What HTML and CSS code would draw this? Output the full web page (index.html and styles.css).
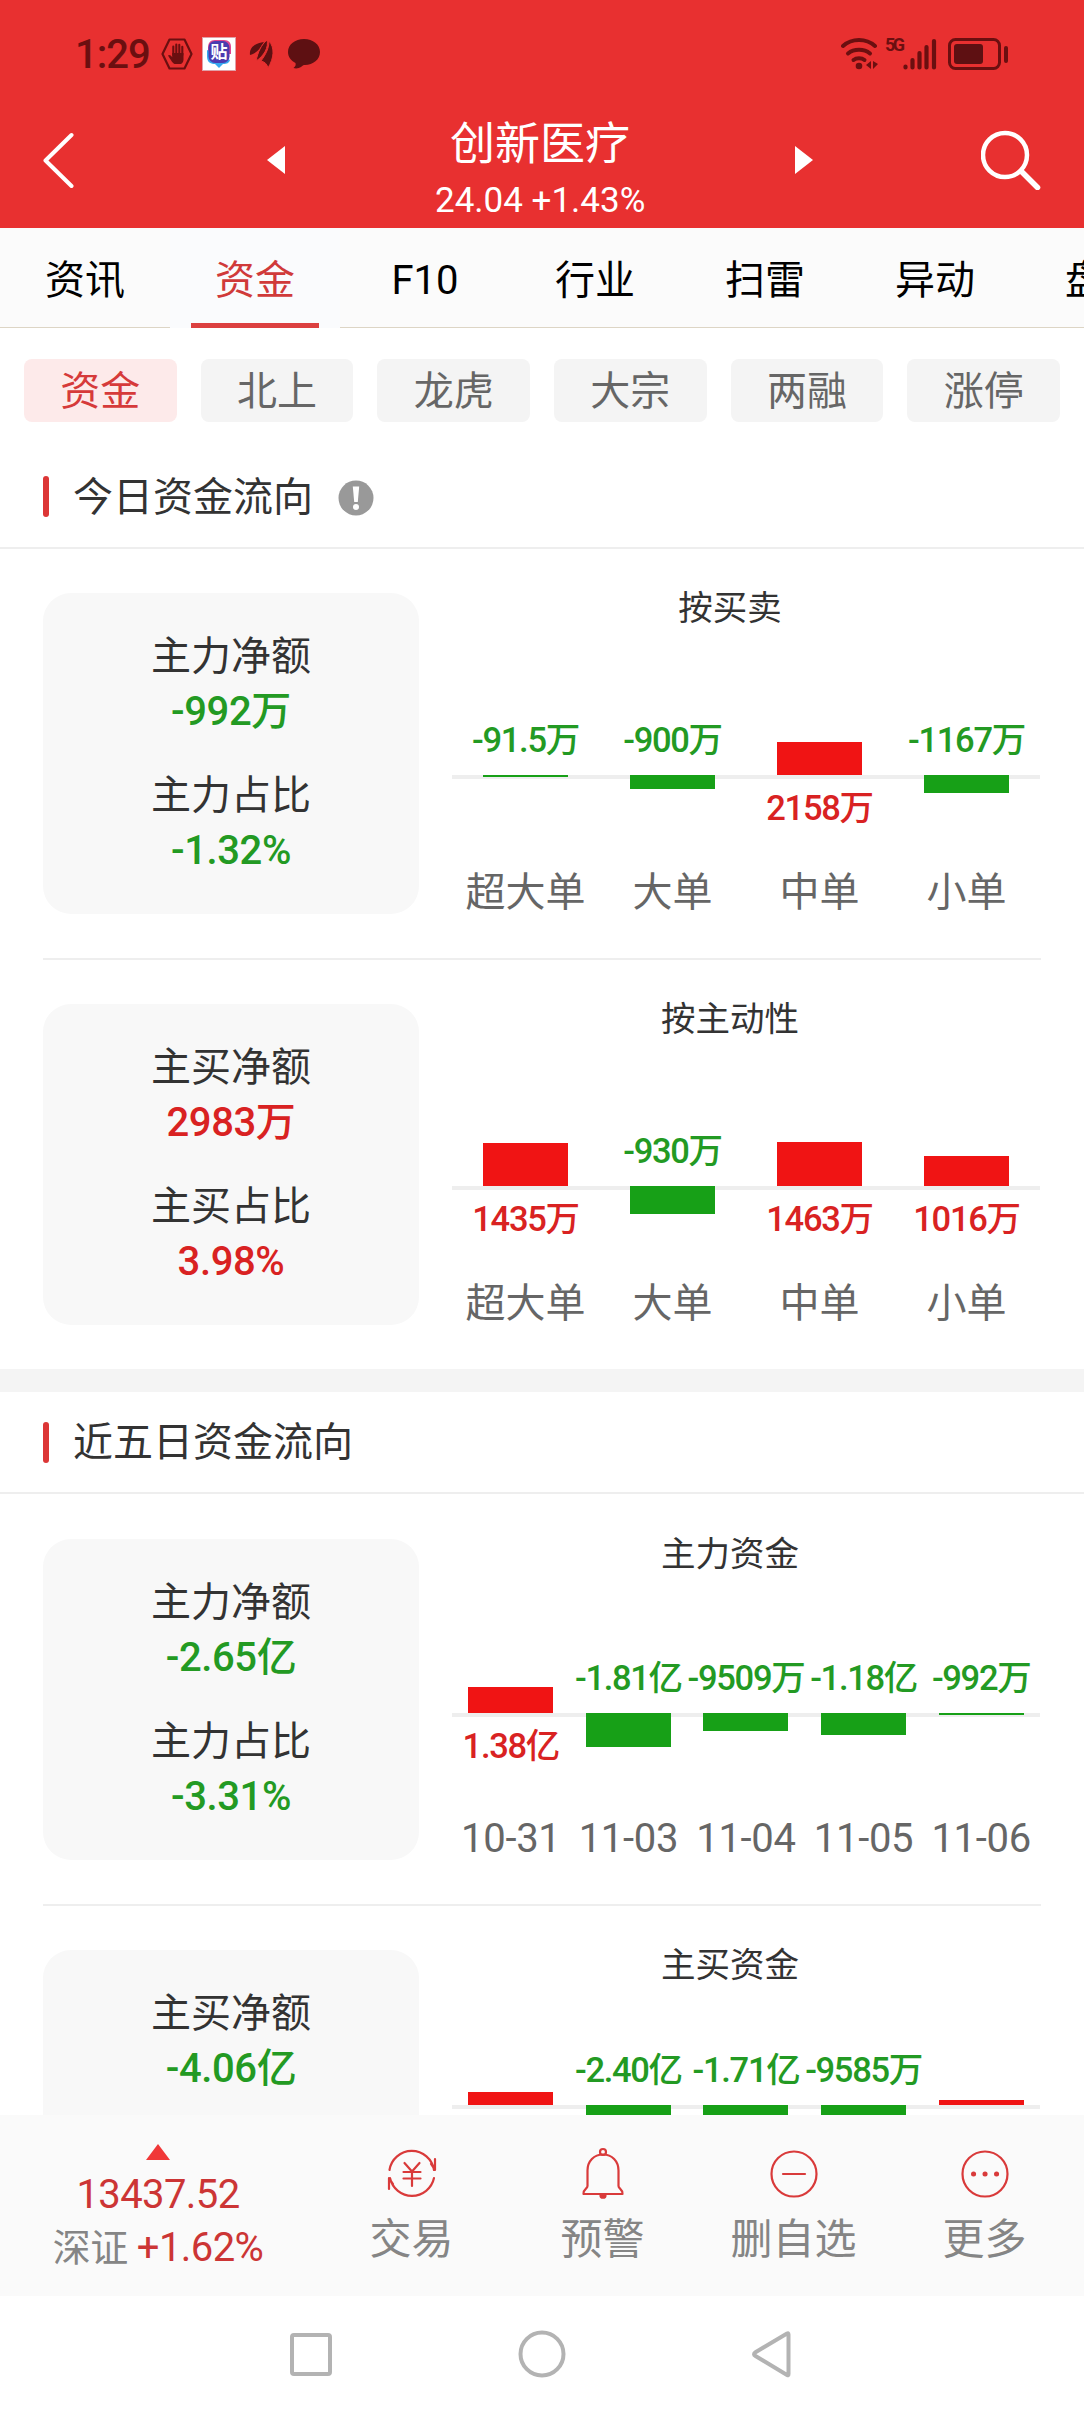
FILE: index.html
```html
<!DOCTYPE html>
<html lang="zh-CN">
<head>
    <meta charset="UTF-8">
    <meta name="viewport" content="width=device-width, initial-scale=1.0">
    <title>创新医疗 - 资金</title>
    <link rel="stylesheet" href="styles.css">
</head>
<body>
    <header class="header">
        <div class="status-bar">
            <div class="status-left">
                <span class="clock">1:29</span>
                <svg class="icon-hand" width="32" height="32" viewBox="0 0 32 32">
                    <path d="M8.500 1.500h15L30.500 16l-7 14.500h-15L1.500 16z" fill="none" stroke="#6b0f10" stroke-width="2.200" stroke-linejoin="round"/>
                    <path d="M12.300 17V8.500M15.300 16V6.500M18.300 16V6.800M21.300 17V8.800" stroke="#6b0f10" stroke-width="2.100" stroke-linecap="round"/>
                    <path d="M11.200 15h11.300v6.500c0 2-1 3.500-2.500 4.500h-6.500c-2-1-3-3-6.500-8.500 1-1.200 2.800-.5 4.200 1.700z" fill="#6b0f10"/>
                </svg>
                <svg class="icon-tie" width="34" height="34" viewBox="0 0 34 34">
                    <rect x=".5" y=".5" width="33" height="33" fill="#fff" stroke="#e0a0a8"/>
                    <path d="M13 3h9c5 0 7 3 7 7v7H6v-6c0-5 2-8 7-8z" fill="#e0458f"/>
                    <path d="M5 13v6c0 6 3 8 8 8l4 4 4-4c4 0 6-1 7-4z" fill="#35a8f0"/>
                    <rect x="6.500" y="4" width="21" height="22" rx="6.500" fill="#4a3bb0"/>
                    <text x="17" y="21" text-anchor="middle" class="tie-text">贴</text>
                </svg>
                <svg class="icon-wing" width="25" height="30" viewBox="0 0 25 30">
                    <path d="M1 16C0 8 7 4 15 3 11 9 10 13 1 16z" fill="#5e1012"/>
                    <path d="M7 22C9 13 12 6 18 1c2 7-3 16-11 21z" fill="#5e1012" stroke="#e83030"/>
                    <path d="M12 22C17 15 20 9 20 2c6 7 5 17-1 27-1-4-3-6-7-7z" fill="#5e1012" stroke="#e83030"/>
                </svg>
                <svg class="icon-bubble" width="32" height="30" viewBox="0 0 32 30">
                    <path d="M16 0c9 0 16 5.500 16 13s-7 13-15 13c-2 0-2 .5-4 2-2 1.300-5 2-7.500 1 2-1.500 2.500-3 2-5C3 21.500 0 18 0 13 0 5.500 7 0 16 0z" fill="#5e1012"/>
                </svg>
            </div>
            <div class="status-right">
                <svg width="38" height="32" viewBox="0 0 38 32">
                    <g fill="none" stroke="#6b0f10" stroke-width="4" stroke-linecap="round">
                        <path d="M2 8C11 0 25 0 34 8"/>
                        <path d="M7 15.500c6-5 16-5 22 0"/>
                        <path d="M12.500 22c3-2.500 8-2.500 11 0"/>
                    </g>
                    <circle cx="18" cy="28" r="3.300" fill="#6b0f10"/>
                    <path d="M30 23v8l-5-4zM32 23v8l5-5z" fill="#6b0f10"/>
                </svg>
                <span class="net-text">5G</span>
                <svg class="icon-signal" width="34" height="32" viewBox="0 0 34 32">
                    <path d="M2.500 28.500v1M9.500 22v7.500M16.500 15v14.500M23.500 9v20.500M31 3v26.500" stroke="#6b0f10" stroke-width="4.200" stroke-linecap="round"/>
                </svg>
                <svg class="icon-battery" width="61" height="32" viewBox="0 0 61 32">
                    <rect x="1.500" y="1.500" width="50" height="29" rx="6" fill="none" stroke="#6b0f10" stroke-width="3"/>
                    <rect x="6" y="6" width="29" height="20" rx="3" fill="#5e1012"/>
                    <rect x="56" y="8" width="4" height="17" rx="2" fill="#6b0f10"/>
                </svg>
            </div>
        </div>
        <div class="title-bar">
            <svg width="32" height="58" viewBox="0 0 32 58">
                <path d="M28.500 4 2.500 29.500l26 25.500" fill="none" stroke="#fff" stroke-width="4" stroke-linecap="round" stroke-linejoin="round"/>
            </svg>
            <svg width="18" height="28" viewBox="0 0 18 28"><path d="M18 0v28L0 14z" fill="#fff"/></svg>
            <div class="stock">
                <h1>创新医疗</h1>
                <p>24.04 +1.43%</p>
            </div>
            <svg class="next" width="18" height="28" viewBox="0 0 18 28"><path d="M0 0v28l18-14z" fill="#fff"/></svg>
            <svg class="search" width="60" height="60" viewBox="0 0 60 60">
                <circle cx="24" cy="25" r="22" fill="none" stroke="#fff" stroke-width="4.500"/>
                <path d="m40.500 41.500 16 16" stroke="#fff" stroke-width="5.500" stroke-linecap="round"/>
            </svg>
        </div>
    </header>

    <nav class="tabs">
        <a class="tab">资讯</a>
        <a class="tab active">资金</a>
        <a class="tab">F10</a>
        <a class="tab">行业</a>
        <a class="tab">扫雷</a>
        <a class="tab">异动</a>
        <a class="tab">盘口</a>
    </nav>

    <main class="content">
        <div class="pills">
            <span class="pill active">资金</span>
            <span class="pill">北上</span>
            <span class="pill">龙虎</span>
            <span class="pill">大宗</span>
            <span class="pill">两融</span>
            <span class="pill">涨停</span>
        </div>

        <section>
            <h2 class="section-title"><span>今日资金流向</span>
                <svg class="info" width="36" height="36" viewBox="0 0 36 36">
                    <circle cx="18" cy="18" r="17.500" fill="#999"/>
                    <path d="M14.800 6.500h6.400L19.800 22h-3.600z" fill="#fff"/>
                    <circle cx="18" cy="27" r="3" fill="#fff"/>
                </svg>
            </h2>
            <div class="row">
                <div class="card">
                    <h3>主力净额</h3>
                    <p class="down">-992万</p>
                    <h3>主力占比</h3>
                    <p class="down">-1.32%</p>
                </div>
                <div class="chart">
                    <h4>按买卖</h4>
                    <div class="plot">
                        <div class="col">
                            <div class="above"><span class="value down">-91.5万</span></div>
                            <div class="below"><i class="bar bar-down" style="height: 2px"></i></div>
                            <span class="label">超大单</span>
                        </div>
                        <div class="col">
                            <div class="above"><span class="value down">-900万</span></div>
                            <div class="below"><i class="bar bar-down" style="height: 14px"></i></div>
                            <span class="label">大单</span>
                        </div>
                        <div class="col">
                            <div class="above"><i class="bar bar-up" style="height: 33px"></i></div>
                            <div class="below"><span class="value up">2158万</span></div>
                            <span class="label">中单</span>
                        </div>
                        <div class="col">
                            <div class="above"><span class="value down">-1167万</span></div>
                            <div class="below"><i class="bar bar-down" style="height: 18px"></i></div>
                            <span class="label">小单</span>
                        </div>
                    </div>
                </div>
            </div>
            <div class="row">
                <div class="card">
                    <h3>主买净额</h3>
                    <p class="up">2983万</p>
                    <h3>主买占比</h3>
                    <p class="up">3.98%</p>
                </div>
                <div class="chart">
                    <h4>按主动性</h4>
                    <div class="plot">
                        <div class="col">
                            <div class="above"><i class="bar bar-up" style="height: 43px"></i></div>
                            <div class="below"><span class="value up">1435万</span></div>
                            <span class="label">超大单</span>
                        </div>
                        <div class="col">
                            <div class="above"><span class="value down">-930万</span></div>
                            <div class="below"><i class="bar bar-down" style="height: 28px"></i></div>
                            <span class="label">大单</span>
                        </div>
                        <div class="col">
                            <div class="above"><i class="bar bar-up" style="height: 44px"></i></div>
                            <div class="below"><span class="value up">1463万</span></div>
                            <span class="label">中单</span>
                        </div>
                        <div class="col">
                            <div class="above"><i class="bar bar-up" style="height: 30px"></i></div>
                            <div class="below"><span class="value up">1016万</span></div>
                            <span class="label">小单</span>
                        </div>
                    </div>
                </div>
            </div>
        </section>

        <section class="section-five">
            <h2 class="section-title"><span>近五日资金流向</span></h2>
            <div class="row">
                <div class="card">
                    <h3>主力净额</h3>
                    <p class="down">-2.65亿</p>
                    <h3>主力占比</h3>
                    <p class="down">-3.31%</p>
                </div>
                <div class="chart">
                    <h4>主力资金</h4>
                    <div class="plot plot-main">
                        <div class="col">
                            <div class="above"><i class="bar bar-up" style="height: 26px"></i></div>
                            <div class="below"><span class="value up">1.38亿</span></div>
                            <span class="label date">10-31</span>
                        </div>
                        <div class="col">
                            <div class="above"><span class="value down">-1.81亿</span></div>
                            <div class="below"><i class="bar bar-down" style="height: 34px"></i></div>
                            <span class="label date">11-03</span>
                        </div>
                        <div class="col">
                            <div class="above"><span class="value down">-9509万</span></div>
                            <div class="below"><i class="bar bar-down" style="height: 18px"></i></div>
                            <span class="label date">11-04</span>
                        </div>
                        <div class="col">
                            <div class="above"><span class="value down">-1.18亿</span></div>
                            <div class="below"><i class="bar bar-down" style="height: 22px"></i></div>
                            <span class="label date">11-05</span>
                        </div>
                        <div class="col">
                            <div class="above"><span class="value down">-992万</span></div>
                            <div class="below"><i class="bar bar-down" style="height: 2px"></i></div>
                            <span class="label date">11-06</span>
                        </div>
                    </div>
                </div>
            </div>
            <div class="row">
                <div class="card">
                    <h3>主买净额</h3>
                    <p class="down">-4.06亿</p>
                </div>
                <div class="chart">
                    <h4>主买资金</h4>
                    <div class="plot plot-buy">
                        <div class="col">
                            <div class="above"><i class="bar bar-up" style="height: 13px"></i></div>
                            <div class="below"></div>
                        </div>
                        <div class="col">
                            <div class="above"><span class="value down">-2.40亿</span></div>
                            <div class="below"><i class="bar bar-down" style="height: 52px"></i></div>
                        </div>
                        <div class="col">
                            <div class="above"><span class="value down">-1.71亿</span></div>
                            <div class="below"><i class="bar bar-down" style="height: 37px"></i></div>
                        </div>
                        <div class="col">
                            <div class="above"><span class="value down">-9585万</span></div>
                            <div class="below"><i class="bar bar-down" style="height: 21px"></i></div>
                        </div>
                        <div class="col">
                            <div class="above"><i class="bar bar-up" style="height: 5px"></i></div>
                            <div class="below"></div>
                        </div>
                    </div>
                </div>
            </div>
        </section>
    </main>

    <footer class="toolbar">
        <div class="index">
            <svg width="24" height="16" viewBox="0 0 24 16"><path d="M12 0l12 16H0z" fill="#f03838"/></svg>
            <strong>13437.52</strong>
            <p><span>深证</span> +1.62%</p>
        </div>
        <a class="tool">
            <svg width="52" height="52" viewBox="0 0 52 52">
                <path d="M3.500 22a22.500 22.500 0 0 1 44.500 0M49 11v11l-4-6M48 30a22.500 22.500 0 0 1-44 0M3 41V30l4 6"/>
                <path d="m18.500 15 7.500 8.500 7.500-8.500M26 23.500V38M17.500 24h17M17.500 30.500h17"/>
            </svg>
            <span>交易</span>
        </a>
        <a class="tool">
            <svg width="52" height="52" viewBox="0 0 52 52">
                <circle cx="26" cy="4" r="3"/>
                <path d="M26 6.500c-9 0-15.500 6.500-15.500 16V38c0 3-4 2.500-4 8h39c0-5.500-4-5-4-8V22.500c0-9.500-6.500-16-15.500-16z"/>
                <path d="M23.500 47.500h5c0 3-5 3-5 0z" fill="#d93a3a"/>
            </svg>
            <span>预警</span>
        </a>
        <a class="tool">
            <svg width="52" height="52" viewBox="0 0 52 52">
                <circle cx="26" cy="26" r="22.500"/>
                <path d="M15 26h22"/>
            </svg>
            <span>删自选</span>
        </a>
        <a class="tool">
            <svg width="52" height="52" viewBox="0 0 52 52">
                <circle cx="26" cy="26" r="22.500"/>
                <path d="M14.500 26h.1M26 26h.1M37.500 26h.1" stroke-width="5" class="dots"/>
            </svg>
            <span>更多</span>
        </a>
    </footer>

    <div class="nav-bar">
        <svg width="46" height="46" viewBox="0 0 46 46"><rect x="4" y="4" width="38" height="39" rx="2"/></svg>
        <svg width="50" height="50" viewBox="0 0 50 50"><circle cx="25" cy="25" r="21.500"/></svg>
        <svg width="46" height="50" viewBox="0 0 46 50"><path d="M38.500 5.500v39.500c0 1.500-.5 1.500-1.500 1L5.500 27c-2-1.200-2-2.500 0-3.800L37 4.500c1-.5 1.500-.5 1.500 1z"/></svg>
    </div>
</body>
</html>
```
FILE: styles.css
```css
* {
    margin: 0;
    padding: 0;
    box-sizing: border-box;
}

body {
    display: flex;
    flex-direction: column;
    width: 1084px;
    height: 2412px;
    overflow: hidden;
    font-family: Roboto, "Noto Sans CJK SC", sans-serif;
    font-size: 39px;
    color: #333;
    background: #fff;
}

h1, h2, h3, h4 {
    font-weight: 400;
}

svg {
    display: block;
    flex-shrink: 0;
}

.up {
    color: #d92222;
}

.down {
    color: #239a23;
}

/* 顶部 */
.header {
    height: 228px;
    background: #e83030;
}

.status-bar {
    display: flex;
    justify-content: space-between;
    height: 108px;
    padding: 0 75px;
    color: #6b0f10;
}

.status-left,
.status-right {
    display: flex;
    align-items: center;
}

.clock {
    width: 86px;
    font-size: 40px;
    font-weight: 500;
    letter-spacing: -1px;
}

.icon-tie {
    margin-left: 9px;
}

.icon-wing {
    margin-left: 13px;
}

.icon-bubble {
    margin-left: 14px;
}

.tie-text {
    font-size: 17px;
    font-weight: 700;
    fill: #fff;
}

.net-text {
    width: 24px;
    padding: 0 0 18px 6px;
    font-size: 18px;
    font-weight: 700;
    line-height: 18px;
    letter-spacing: -2.5px;
}

.icon-battery {
    margin-left: 11px;
}

.title-bar {
    display: grid;
    grid-template-columns: 224px 1fr 210px 1fr 228px;
    grid-template-rows: 104px;
    align-items: center;
    padding: 0 43px;
    color: #fff;
}

.stock {
    align-self: start;
    padding-top: 8px;
    text-align: center;
    white-space: nowrap;
}

.stock h1 {
    font-size: 45px;
    line-height: 58px;
}

.stock p {
    font-size: 35px;
    line-height: 54px;
}

.next,
.search {
    justify-self: end;
}

/* 标签页 */
.tabs {
    display: flex;
    height: 100px;
    overflow: hidden;
}

.tab {
    flex: 0 0 170px;
    height: 100px;
    border-bottom: 1px solid #ddd5c5;
    background: #fbfbfb;
    color: #000;
    font-size: 40px;
    line-height: 105px;
    text-align: center;
}

.tab.active {
    display: flex;
    flex-direction: column;
    align-items: center;
    border-bottom: none;
    background: #fafbfd;
    color: #d03a3a;
}

.tab.active::after {
    content: "";
    width: 128px;
    height: 5px;
    margin-top: -10px;
    background: #dc4040;
}

/* 内容区 */
.content {
    flex: 1;
    min-height: 0;
    overflow: hidden;
}

.pills {
    display: flex;
    gap: 24px;
    padding: 31px 24px 24px;
}

.pill {
    flex: 1;
    height: 63px;
    border-radius: 8px;
    background: #f4f4f4;
    color: #666;
    font-size: 40px;
    line-height: 66px;
    text-align: center;
}

.pill.active {
    background: #fdeaea;
    color: #d63a3a;
}

.section-title {
    display: flex;
    align-items: center;
    height: 103px;
    padding-left: 43px;
    border-bottom: 2px solid #eee;
    font-size: 40px;
}

.section-title::before {
    content: "";
    width: 6px;
    height: 41px;
    margin-right: 24px;
    border-radius: 3px;
    background: #dc3636;
}

.section-title span {
    padding-bottom: 6px;
}

.info {
    margin: 2px 0 0 25px;
}

.section-five {
    border-top: 23px solid #f4f4f4;
}

.section-five .section-title {
    height: 102px;
}

.row {
    display: flex;
    margin: 0 43px;
    padding: 44px 0;
    border-bottom: 2px solid #eee;
}

.section-five .section-title + .row {
    padding-top: 45px;
}

.row:last-child {
    border-bottom: none;
}

.card {
    width: 376px;
    height: 321px;
    padding-top: 36px;
    border-radius: 28px;
    background: #f8f8f8;
    text-align: center;
}

.card h3 {
    font-size: 40px;
    line-height: 55px;
}

.card p {
    margin-bottom: 28px;
    font-size: 40px;
    font-weight: 500;
    line-height: 56px;
    letter-spacing: -0.4px;
}

/* 柱状图 */
.chart {
    flex: 1;
    height: 321px;
    margin-top: -3px;
}

.chart h4 {
    font-size: 34.5px;
    line-height: 37px;
    text-align: center;
}

.plot {
    --axis: 148px;
    position: relative;
    display: flex;
    width: 588px;
    height: 288px;
    margin-left: 33px;
}

.plot-main {
    --axis: 140px;
}

.plot-buy {
    --axis: 121px;
}

.plot::before {
    content: "";
    position: absolute;
    top: var(--axis);
    width: 100%;
    height: 4px;
    background: #eee;
}

.col {
    position: relative;
    display: flex;
    flex: 1 1 0;
    flex-direction: column;
    align-items: center;
    min-width: 0;
}

.above,
.below {
    display: flex;
    flex-direction: column;
    align-items: center;
}

.above {
    justify-content: flex-end;
    height: var(--axis);
}

.below {
    flex: 1;
}

.bar {
    width: 85px;
}

.bar-up {
    background: #f01414;
}

.bar-down {
    background: #17a017;
}

.value {
    font-size: 34.5px;
    font-weight: 500;
    line-height: 36px;
    letter-spacing: -1.3px;
    white-space: nowrap;
}

.above .value {
    margin-bottom: 17px;
}

.below .value {
    margin-top: 15px;
}

.label {
    color: #666;
    font-size: 40px;
    line-height: 44px;
    white-space: nowrap;
}

.date {
    letter-spacing: -0.3px;
}

/* 底部工具栏 */
.toolbar {
    display: flex;
    height: 181px;
    padding-right: 4px;
    background: #fafafa;
}

.index {
    display: flex;
    flex-direction: column;
    align-items: center;
    width: 316px;
    padding-top: 29px;
    color: #cc3535;
    font-size: 40px;
    letter-spacing: -0.6px;
}

.index strong {
    margin-top: 8px;
    font-weight: 400;
    line-height: 54px;
}

.index p {
    line-height: 52px;
    white-space: nowrap;
}

.index span {
    color: #858585;
    font-size: 38px;
}

.tool {
    display: flex;
    flex: 1;
    flex-direction: column;
    align-items: center;
    padding-top: 33px;
    color: #858585;
    font-size: 42px;
    line-height: 79px;
}

.tool svg {
    overflow: visible;
    fill: none;
    stroke: #d93a3a;
    stroke-width: 2.2px;
    stroke-linecap: round;
    stroke-linejoin: round;
}

.tool .dots {
    stroke-width: 5px;
}

/* 系统导航 */
.nav-bar {
    display: flex;
    align-items: center;
    justify-content: center;
    gap: 183px;
    height: 116px;
}

.nav-bar svg {
    fill: none;
    stroke: #b3b3b3;
    stroke-width: 4px;
}
```
